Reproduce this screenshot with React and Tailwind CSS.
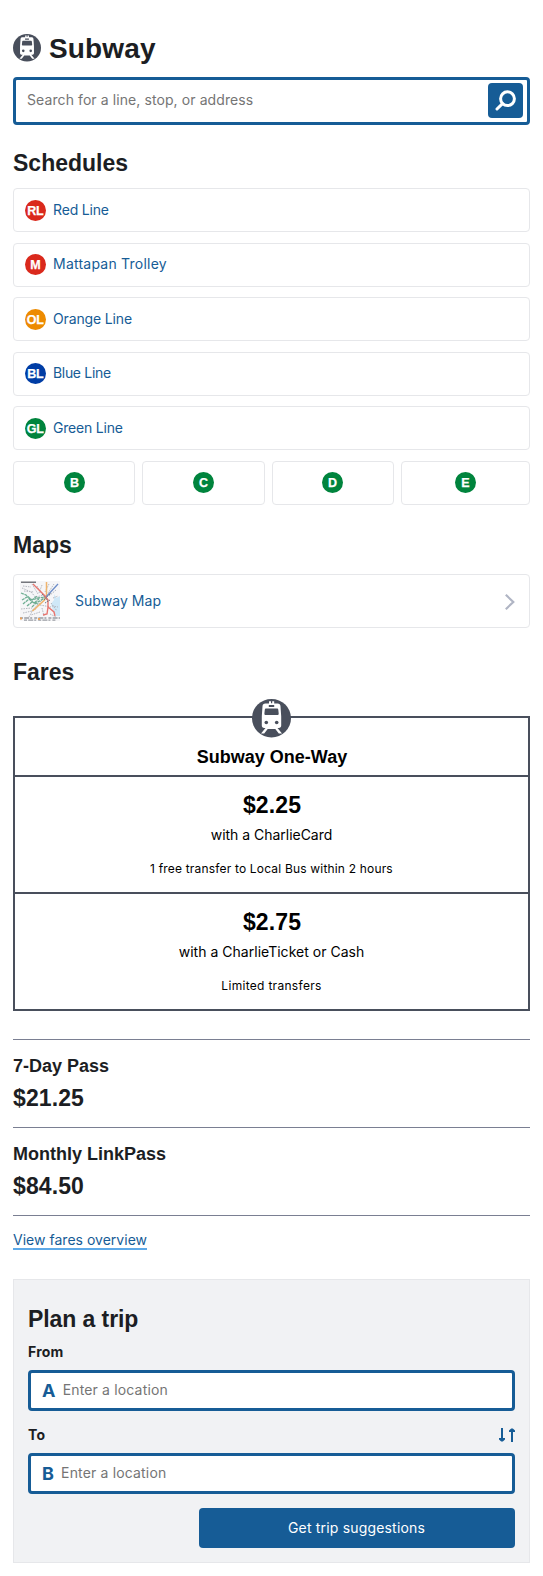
import React from "react";

const LINES = [
  { code: "RL", name: "Red Line", fill: "#da291c", tracking: "tracking-[-0.17px]" },
  { code: "M", name: "Mattapan Trolley", fill: "#da291c", tracking: "tracking-[0.23px]" },
  { code: "OL", name: "Orange Line", fill: "#ed8b00", tracking: "tracking-[-0.14px]" },
  { code: "BL", name: "Blue Line", fill: "#003da5", tracking: "tracking-[-0.32px]" },
  { code: "GL", name: "Green Line", fill: "#00843d", tracking: "tracking-[-0.2px]" },
];
const BRANCHES = ["B", "C", "D", "E"];
const HEADING = "font-['Liberation_Sans',sans-serif] font-bold";
const H2 = "font-['Liberation_Sans',sans-serif] text-[23px] leading-[28px] font-bold tracking-normal";

function TrainIcon({ className }) {
  return (
    <svg viewBox="0 0 39 39" className={className} aria-hidden="true">
      <ellipse cx="19.5" cy="19.2" rx="19.500" ry="19.200" fill="#494f5c" />
      <path
        fill="#fff"
        d="M17 2.200h2v2h1.200v-2h2v2.200h3.300c1.900 0 2.900.9 3 2.800l.7 10v9.300c0 1.600-.9 2.500-2.400 2.500h-1.300l4.500 5.600h-3.200l-3.500-4.600h-7.600l-3.500 4.600H9l4.500-5.600h-1.300c-1.500 0-2.400-.9-2.400-2.500v-9.300l.7-10c.1-1.900 1.100-2.800 3-2.800H17z"
      />
      <path
        fill="#494f5c"
        d="M16.800 6.100h5.400v1.900h-5.400zM14.300 9.400h10.500c1 0 1.400.4 1.500 1.400l.4 3.700c.1 1-.5 1.600-1.500 1.600H13.900c-1 0-1.600-.6-1.500-1.600l.4-3.700c.1-1 .5-1.400 1.500-1.400z"
      />
      <circle cx="14.300" cy="23.500" r="1.800" fill="#494f5c" />
      <circle cx="24.700" cy="23.500" r="1.800" fill="#494f5c" />
    </svg>
  );
}

function LineIcon({ code, fill }) {
  return (
    <svg viewBox="0 0 21 21" className="size-[21px] shrink-0">
      <circle cx="10.500" cy="10.500" r="10.500" fill={fill} />
      <text
        x="10.300"
        y="15"
        fill="#fff"
        stroke="#fff"
        strokeWidth="0.250"
        textAnchor="middle"
        className="font-['Liberation_Sans',sans-serif] text-[12.5px] font-bold tracking-[-0.2px]"
      >
        {code}
      </text>
    </svg>
  );
}

function MapThumb() {
  return (
    <svg viewBox="0 0 40 40" className="size-10 shrink-0" aria-hidden="true">
      <rect width="40" height="40" fill="#f6f6f8" />
      <path d="M34 13l2 4 4-2v20h-4l-3-5-2-7 3-4z" fill="#cfe8f8" />
      <g fill="none" stroke="#b4b7bf" strokeWidth="1" strokeDasharray="1.500 1">
        <path d="M2 7l9 4 7 8M3 32l9-2 7-8M9 36l5-9M29 3l-4 8M34 3l-6 9M22 27l2 8M31 22l6 8M4 10l10 1M12 3l6 10M20 31l-9 3M33 17l5-2M30 33l6 3M17 5l4 7M1 28l11-1M3 5l8 1M22 4l-3 8M36 9l-7 6M32 25l6 1M21 20l-6 9M16 16l8-2M20 24l11 2" />
      </g>
      <g fill="none" stroke="#6fae93" strokeWidth="1.300" strokeDasharray="3 .7">
        <path d="M1 12l5 2 6 5 6-2 8-1M2 19l5-3 5 3 5-4M3 23l6-5 5 4 5-4M7 25l5-4 6 2M12 26l4-4 9-5" />
      </g>
      <path d="M26.500 1v13l-2 5-12 11" fill="none" stroke="#f0b46c" strokeWidth="1.500" />
      <path d="M38 3L26 16" fill="none" stroke="#6d8dc8" strokeWidth="1.300" />
      <path d="M13 3l12 12 3 4v7l6 5 1 4M28 26l-1 7-4 1" fill="none" stroke="#e7756f" strokeWidth="1.400" />
      <path d="M1 1.200h15" stroke="#55585e" strokeWidth="1.200" />
      <path d="M24 19l7-7M22 13l6 7M25 22l5-3" stroke="#777a82" strokeWidth="1" strokeDasharray="1.500 .8" />
      <path d="M0 37h40M4 39.200h32" stroke="#9a9da3" strokeWidth="1.300" strokeDasharray="3 1.200 5 1 2 2" />
      <path d="M0 37.500h2M18 38h2" stroke="#eaa25c" strokeWidth="2" />
    </svg>
  );
}

function Fare({ price, media, note, mediaTracking, noteTracking }) {
  return (
    <div className="flex h-[117px] flex-col items-center border-t-2 border-[#494f5c]">
      <div className={`${HEADING} mt-[14px] pl-px text-[23px] leading-[28px] tracking-[0.1px]`}>{price}</div>
      <div className={`mt-[5px] leading-[21px] ${mediaTracking}`}>{media}</div>
      <div className={`mt-[15px] text-[12px] leading-[18px] ${noteTracking}`}>{note}</div>
    </div>
  );
}

function Pass({ name, price }) {
  return (
    <div className="h-[88px] border-t border-[#7a7f92] pt-[15px]">
      <div className={`${HEADING} text-[18px] leading-[22px] tracking-normal`}>{name}</div>
      <div className={`${HEADING} mt-[7px] text-[23px] leading-[28px] tracking-[0.1px]`}>{price}</div>
    </div>
  );
}

function LocationInput({ letter }) {
  return (
    <div className="flex h-[41px] items-center rounded-[4px] border-[3px] border-[#165c96] bg-white pl-[11px]">
      <span className="text-[18px] leading-[21px] font-bold text-[#165c96]">{letter}</span>
      <span className="mb-[2px] ml-[7px] tracking-[0.16px] text-[#757575]">Enter a location</span>
    </div>
  );
}

export default function App() {
  return (
    <main className="h-[1576px] w-[543px] bg-white px-[13px] pt-[32px] font-['Inter',sans-serif] text-[14px] leading-[21px] tracking-[0.2px] text-[#1c1e23]">
      <header className="flex h-[34px] items-center gap-2">
        <TrainIcon className="mt-[-2px] size-[28px]" />
        <h1 className="font-['Liberation_Sans',sans-serif] text-[28px] leading-[34px] font-bold tracking-[0.15px]">Subway</h1>
      </header>

      <div className="mt-[11px] flex h-[48px] items-center justify-between rounded-[4px] border-[3px] border-[#165c96] pr-1 pl-[11px]">
        <span className="mb-[3px] tracking-[0.09px] text-[#757575]">Search for a line, stop, or address</span>
        <button className="mb-px flex size-[35px] items-center justify-center rounded-[4px] bg-[#165c96]">
          <svg viewBox="0 0 21 21" className="size-[21px]" fill="none" stroke="#fff">
            <circle cx="12.500" cy="8.700" r="6.900" strokeWidth="3" />
            <path d="M7.500 13.700L2 19" strokeWidth="3" strokeLinecap="round" />
          </svg>
        </button>
      </div>

      <h2 className={`${H2} mt-[24px]`}>Schedules</h2>
      <div className="mt-[11px] flex flex-col gap-[10.500px]">
        {LINES.map((l) => (
          <a key={l.code} className="flex h-[44px] items-center gap-[7px] rounded-[4px] border border-[#e6e7ea] pl-[11px] text-[#165c96]">
            <LineIcon code={l.code} fill={l.fill} />
            <span className={`mb-[2px] ${l.tracking}`}>{l.name}</span>
          </a>
        ))}
      </div>
      <div className="mt-[10.500px] flex">
        {BRANCHES.map((b) => (
          <div key={b} className="w-1/4 pr-[7px] last:pr-0">
            <a className="flex h-[44px] items-center justify-center rounded-[4px] border border-[#e6e7ea]">
              <LineIcon code={b} fill="#00843d" />
            </a>
          </div>
        ))}
      </div>

      <h2 className={`${H2} mt-[26.500px]`}>Maps</h2>
      <a className="mt-[15px] flex h-[54px] items-center rounded-[4px] border border-[#e6e7ea] pr-[14px] pl-[6px] text-[#165c96]">
        <MapThumb />
        <span className="mb-[2px] ml-[15px] grow tracking-[0.05px]">Subway Map</span>
        <svg viewBox="0 0 10 16" className="mt-[2px] h-[16px] w-[10px]" fill="none" stroke="#b0b5c4" strokeWidth="2.200">
          <path d="M.8 .8L8.300 8 .8 15.200" />
        </svg>
      </a>

      <h2 className={`${H2} mt-[30px]`}>Fares</h2>
      <section className="mt-[30px] h-[295px] border-2 border-[#494f5c] text-center text-black">
        <div className="relative h-[57px] pt-[28px]">
          <TrainIcon className="absolute top-[-19px] left-[237px] size-[39px]" />
          <h3 className={`${HEADING} pl-px text-[18px] leading-[22px] tracking-normal`}>Subway One-Way</h3>
        </div>
        <Fare
          price="$2.25"
          media="with a CharlieCard"
          mediaTracking="tracking-[-0.02px]"
          note="1 free transfer to Local Bus within 2 hours"
          noteTracking="tracking-[0.18px]"
        />
        <Fare
          price="$2.75"
          media="with a CharlieTicket or Cash"
          mediaTracking="tracking-[0.02px]"
          note="Limited transfers"
          noteTracking="tracking-[0.3px]"
        />
      </section>

      <div className="mt-[28px] border-b border-[#7a7f92]">
        <Pass name="7-Day Pass" price="$21.25" />
        <Pass name="Monthly LinkPass" price="$84.50" />
      </div>
      <div className="flex pt-[13px]">
        <a className="h-[21px] border-b-2 border-[#5da9e8] tracking-[0.02px] text-[#165c96]">View fares overview</a>
      </div>

      <section className="mt-[29px] h-[284px] border border-[#e6e7ea] bg-[#f1f2f4] px-[14px] pt-[25px]">
        <h2 className="font-['Liberation_Sans',sans-serif] text-[23px] leading-[28px] font-bold tracking-[-0.08px]">Plan a trip</h2>
        <div className="mt-[8px] mb-[8px] font-bold">From</div>
        <LocationInput letter="A" />
        <div className="mt-[13px] mb-[8px] flex items-center justify-between font-bold">
          <span>To</span>
          <svg viewBox="0 0 16 14" className="mt-px h-[14px] w-[16px] overflow-visible" fill="#165c96">
            <path d="M2 0h2v10h2v1.400L3.800 13.600H2.200L0 11.400V10h2zM12 14h2V4h2V2.600L13.800.4h-1.600L10 2.600V4h2z" />
          </svg>
        </div>
        <LocationInput letter="B" />
        <div className="mt-[14px] flex justify-end">
          <button className="h-[40px] w-[316px] rounded-[4px] bg-[#165c96] pr-px pb-[2px] tracking-[0.18px] text-white">Get trip suggestions</button>
        </div>
      </section>
    </main>
  );
}
